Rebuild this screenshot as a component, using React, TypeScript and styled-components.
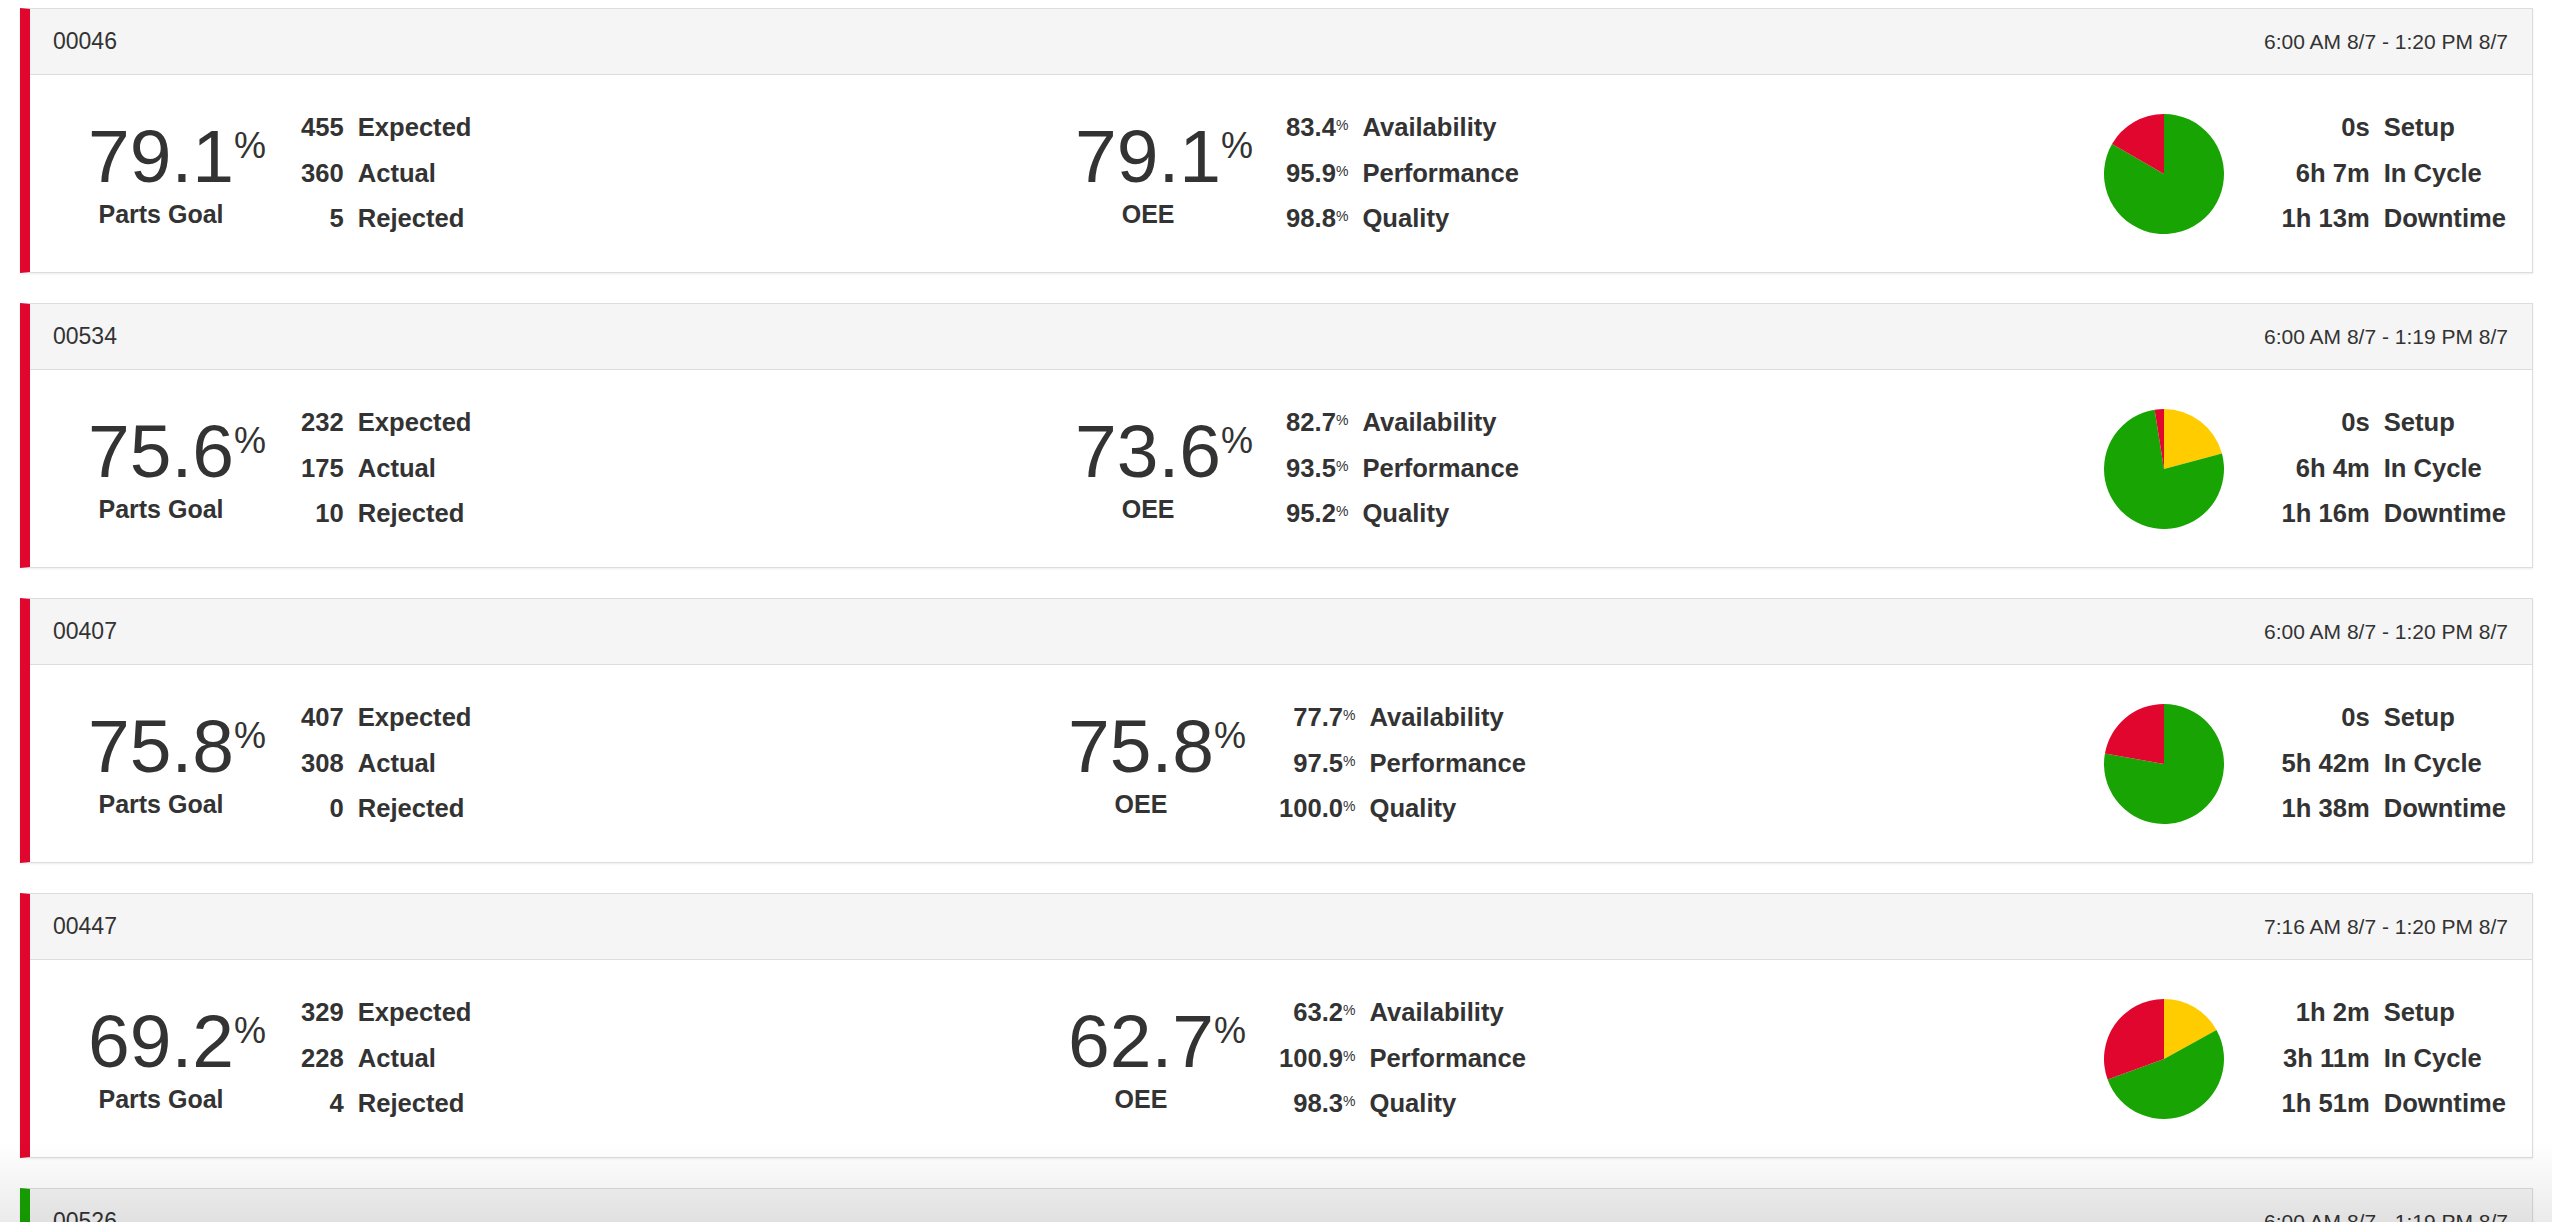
import React from "react";
import styled, { createGlobalStyle } from "styled-components";

type Slice = { from: number; to: number; color: string };

interface Machine {
  id: string;
  range: string;
  status: "down" | "up";
  partsGoal: string;
  expected: number;
  actual: number;
  rejected: number;
  oee: string;
  availability: string;
  performance: string;
  quality: string;
  setup: string;
  inCycle: string;
  downtime: string;
  pie: Slice[];
}

const RED = "#e1062e";
const GREEN = "#18a403";
const YELLOW = "#ffcc00";

const machines: Machine[] = [
  {
    id: "00046",
    range: "6:00 AM 8/7 - 1:20 PM 8/7",
    status: "down",
    partsGoal: "79.1",
    expected: 455,
    actual: 360,
    rejected: 5,
    oee: "79.1",
    availability: "83.4",
    performance: "95.9",
    quality: "98.8",
    setup: "0s",
    inCycle: "6h 7m",
    downtime: "1h 13m",
    pie: [
      { from: 0, to: 300, color: GREEN },
      { from: 300, to: 360, color: RED },
    ],
  },
  {
    id: "00534",
    range: "6:00 AM 8/7 - 1:19 PM 8/7",
    status: "down",
    partsGoal: "75.6",
    expected: 232,
    actual: 175,
    rejected: 10,
    oee: "73.6",
    availability: "82.7",
    performance: "93.5",
    quality: "95.2",
    setup: "0s",
    inCycle: "6h 4m",
    downtime: "1h 16m",
    pie: [
      { from: 0, to: 75, color: YELLOW },
      { from: 75, to: 351, color: GREEN },
      { from: 351, to: 360, color: RED },
    ],
  },
  {
    id: "00407",
    range: "6:00 AM 8/7 - 1:20 PM 8/7",
    status: "down",
    partsGoal: "75.8",
    expected: 407,
    actual: 308,
    rejected: 0,
    oee: "75.8",
    availability: "77.7",
    performance: "97.5",
    quality: "100.0",
    setup: "0s",
    inCycle: "5h 42m",
    downtime: "1h 38m",
    pie: [
      { from: 0, to: 280, color: GREEN },
      { from: 280, to: 360, color: RED },
    ],
  },
  {
    id: "00447",
    range: "7:16 AM 8/7 - 1:20 PM 8/7",
    status: "down",
    partsGoal: "69.2",
    expected: 329,
    actual: 228,
    rejected: 4,
    oee: "62.7",
    availability: "63.2",
    performance: "100.9",
    quality: "98.3",
    setup: "1h 2m",
    inCycle: "3h 11m",
    downtime: "1h 51m",
    pie: [
      { from: 0, to: 61, color: YELLOW },
      { from: 61, to: 250, color: GREEN },
      { from: 250, to: 360, color: RED },
    ],
  },
  {
    id: "00526",
    range: "6:00 AM 8/7 - 1:19 PM 8/7",
    status: "up",
    partsGoal: "92.4",
    expected: 318,
    actual: 294,
    rejected: 2,
    oee: "88.5",
    availability: "93.1",
    performance: "96.2",
    quality: "99.3",
    setup: "0s",
    inCycle: "6h 50m",
    downtime: "29m",
    pie: [
      { from: 0, to: 336, color: GREEN },
      { from: 336, to: 360, color: RED },
    ],
  },
];

// angle in degrees, clockwise from 12 o'clock
const point = (deg: number, r: number): string => {
  const rad = (deg * Math.PI) / 180;
  return `${(r * Math.sin(rad)).toFixed(3)} ${(-r * Math.cos(rad)).toFixed(3)}`;
};

function Pie({ slices }: { slices: Slice[] }): React.ReactElement {
  const r = 60;
  return (
    <PieSvg viewBox="-60 -60 120 120">
      {slices.map((s, i) =>
        s.to - s.from >= 360 ? (
          <circle key={i} r={r} fill={s.color} />
        ) : (
          <path
            key={i}
            fill={s.color}
            d={`M0 0 L${point(s.from, r)} A${r} ${r} 0 ${
              s.to - s.from > 180 ? 1 : 0
            } 1 ${point(s.to, r)} Z`}
          />
        )
      )}
    </PieSvg>
  );
}

function BigStat({ value, label }: { value: string; label: string }) {
  return (
    <BigBlock>
      <BigValue>
        {value}
        <BigPct>%</BigPct>
      </BigValue>
      <BigLabel>{label}</BigLabel>
    </BigBlock>
  );
}

function MachineCard({ m }: { m: Machine }): React.ReactElement {
  return (
    <Card $bar={m.status === "up" ? GREEN : RED}>
      <CardHeader>
        <MachineId>{m.id}</MachineId>
        <TimeRange>{m.range}</TimeRange>
      </CardHeader>
      <CardBody>
        <Group $align="start" $gap={50}>
          <BigStat value={m.partsGoal} label="Parts Goal" />
          <StatTable>
            <StatValue>{m.expected}</StatValue>
            <span>Expected</span>
            <StatValue>{m.actual}</StatValue>
            <span>Actual</span>
            <StatValue>{m.rejected}</StatValue>
            <span>Rejected</span>
          </StatTable>
        </Group>
        <Group $align="center" $gap={48}>
          <BigStat value={m.oee} label="OEE" />
          <StatTable>
            <StatValue>
              {m.availability}
              <SmallPct>%</SmallPct>
            </StatValue>
            <span>Availability</span>
            <StatValue>
              {m.performance}
              <SmallPct>%</SmallPct>
            </StatValue>
            <span>Performance</span>
            <StatValue>
              {m.quality}
              <SmallPct>%</SmallPct>
            </StatValue>
            <span>Quality</span>
          </StatTable>
        </Group>
        <Group $align="end" $gap={57}>
          <Pie slices={m.pie} />
          <StatTable>
            <StatValue>{m.setup}</StatValue>
            <span>Setup</span>
            <StatValue>{m.inCycle}</StatValue>
            <span>In Cycle</span>
            <StatValue>{m.downtime}</StatValue>
            <span>Downtime</span>
          </StatTable>
        </Group>
      </CardBody>
    </Card>
  );
}

export default function App(): React.ReactElement {
  return (
    <>
      <GlobalStyle />
      <Page>
        {machines.map((m) => (
          <MachineCard key={m.id} m={m} />
        ))}
      </Page>
      <BottomFade />
    </>
  );
}

// Styled components
const GlobalStyle = createGlobalStyle`
  html, body {
    margin: 0;
    background: #ffffff;
  }
  body {
    font-family: "Liberation Sans", Arial, Helvetica, sans-serif;
    color: #333333;
  }
`;

const Page = styled.div`
  display: flex;
  flex-direction: column;
  gap: 30px;
  padding: 8px 19px 0 20px;
`;

const Card = styled.div<{ $bar: string }>`
  display: flex;
  flex-direction: column;
  border: 1px solid #dddddd;
  border-left: 10px solid ${({ $bar }) => $bar};
  background: #ffffff;
  box-shadow: 0 1px 2px rgba(0, 0, 0, 0.08);
`;

const CardHeader = styled.div`
  height: 65px;
  display: flex;
  align-items: center;
  justify-content: space-between;
  padding: 0 24px 0 23px;
  background: #f5f5f5;
  border-bottom: 1px solid #dddddd;
`;

const MachineId = styled.span`
  font-size: 23px;
`;

const TimeRange = styled.span`
  font-size: 21px;
`;

const CardBody = styled.div`
  height: 197px;
  display: grid;
  grid-template-columns: repeat(3, 1fr);
  align-items: center;
  padding: 0 26px 0 41px;
`;

const Group = styled.div<{ $align: string; $gap: number }>`
  display: flex;
  align-items: center;
  gap: ${({ $gap }) => $gap}px;
  justify-self: ${({ $align }) => $align};
`;

const BigBlock = styled.div`
  width: 180px;
  display: flex;
  flex-direction: column;
  align-items: center;
`;

const BigValue = styled.div`
  position: relative;
  font-size: 75px;
  line-height: 75px;
  margin-bottom: 5px;
`;

const BigPct = styled.span`
  position: absolute;
  left: 100%;
  top: 9px;
  font-size: 36px;
  line-height: 36px;
`;

const BigLabel = styled.div`
  font-size: 25px;
  line-height: 30px;
  font-weight: bold;
`;

const StatTable = styled.div`
  display: grid;
  grid-template-columns: auto auto;
  column-gap: 14px;
  font-size: 25.6px;
  line-height: 45.5px;
  font-weight: bold;
  white-space: nowrap;
`;

const StatValue = styled.span`
  text-align: right;
`;

const SmallPct = styled.span`
  font-size: 14px;
  line-height: 1;
  font-weight: normal;
  vertical-align: 6px;
`;

const PieSvg = styled.svg`
  width: 120px;
  height: 120px;
  display: block;
`;

const BottomFade = styled.div`
  position: fixed;
  left: 0;
  right: 0;
  bottom: 0;
  height: 80px;
  pointer-events: none;
  background: linear-gradient(to bottom, rgba(0, 0, 0, 0), rgba(0, 0, 0, 0.08));
`;
